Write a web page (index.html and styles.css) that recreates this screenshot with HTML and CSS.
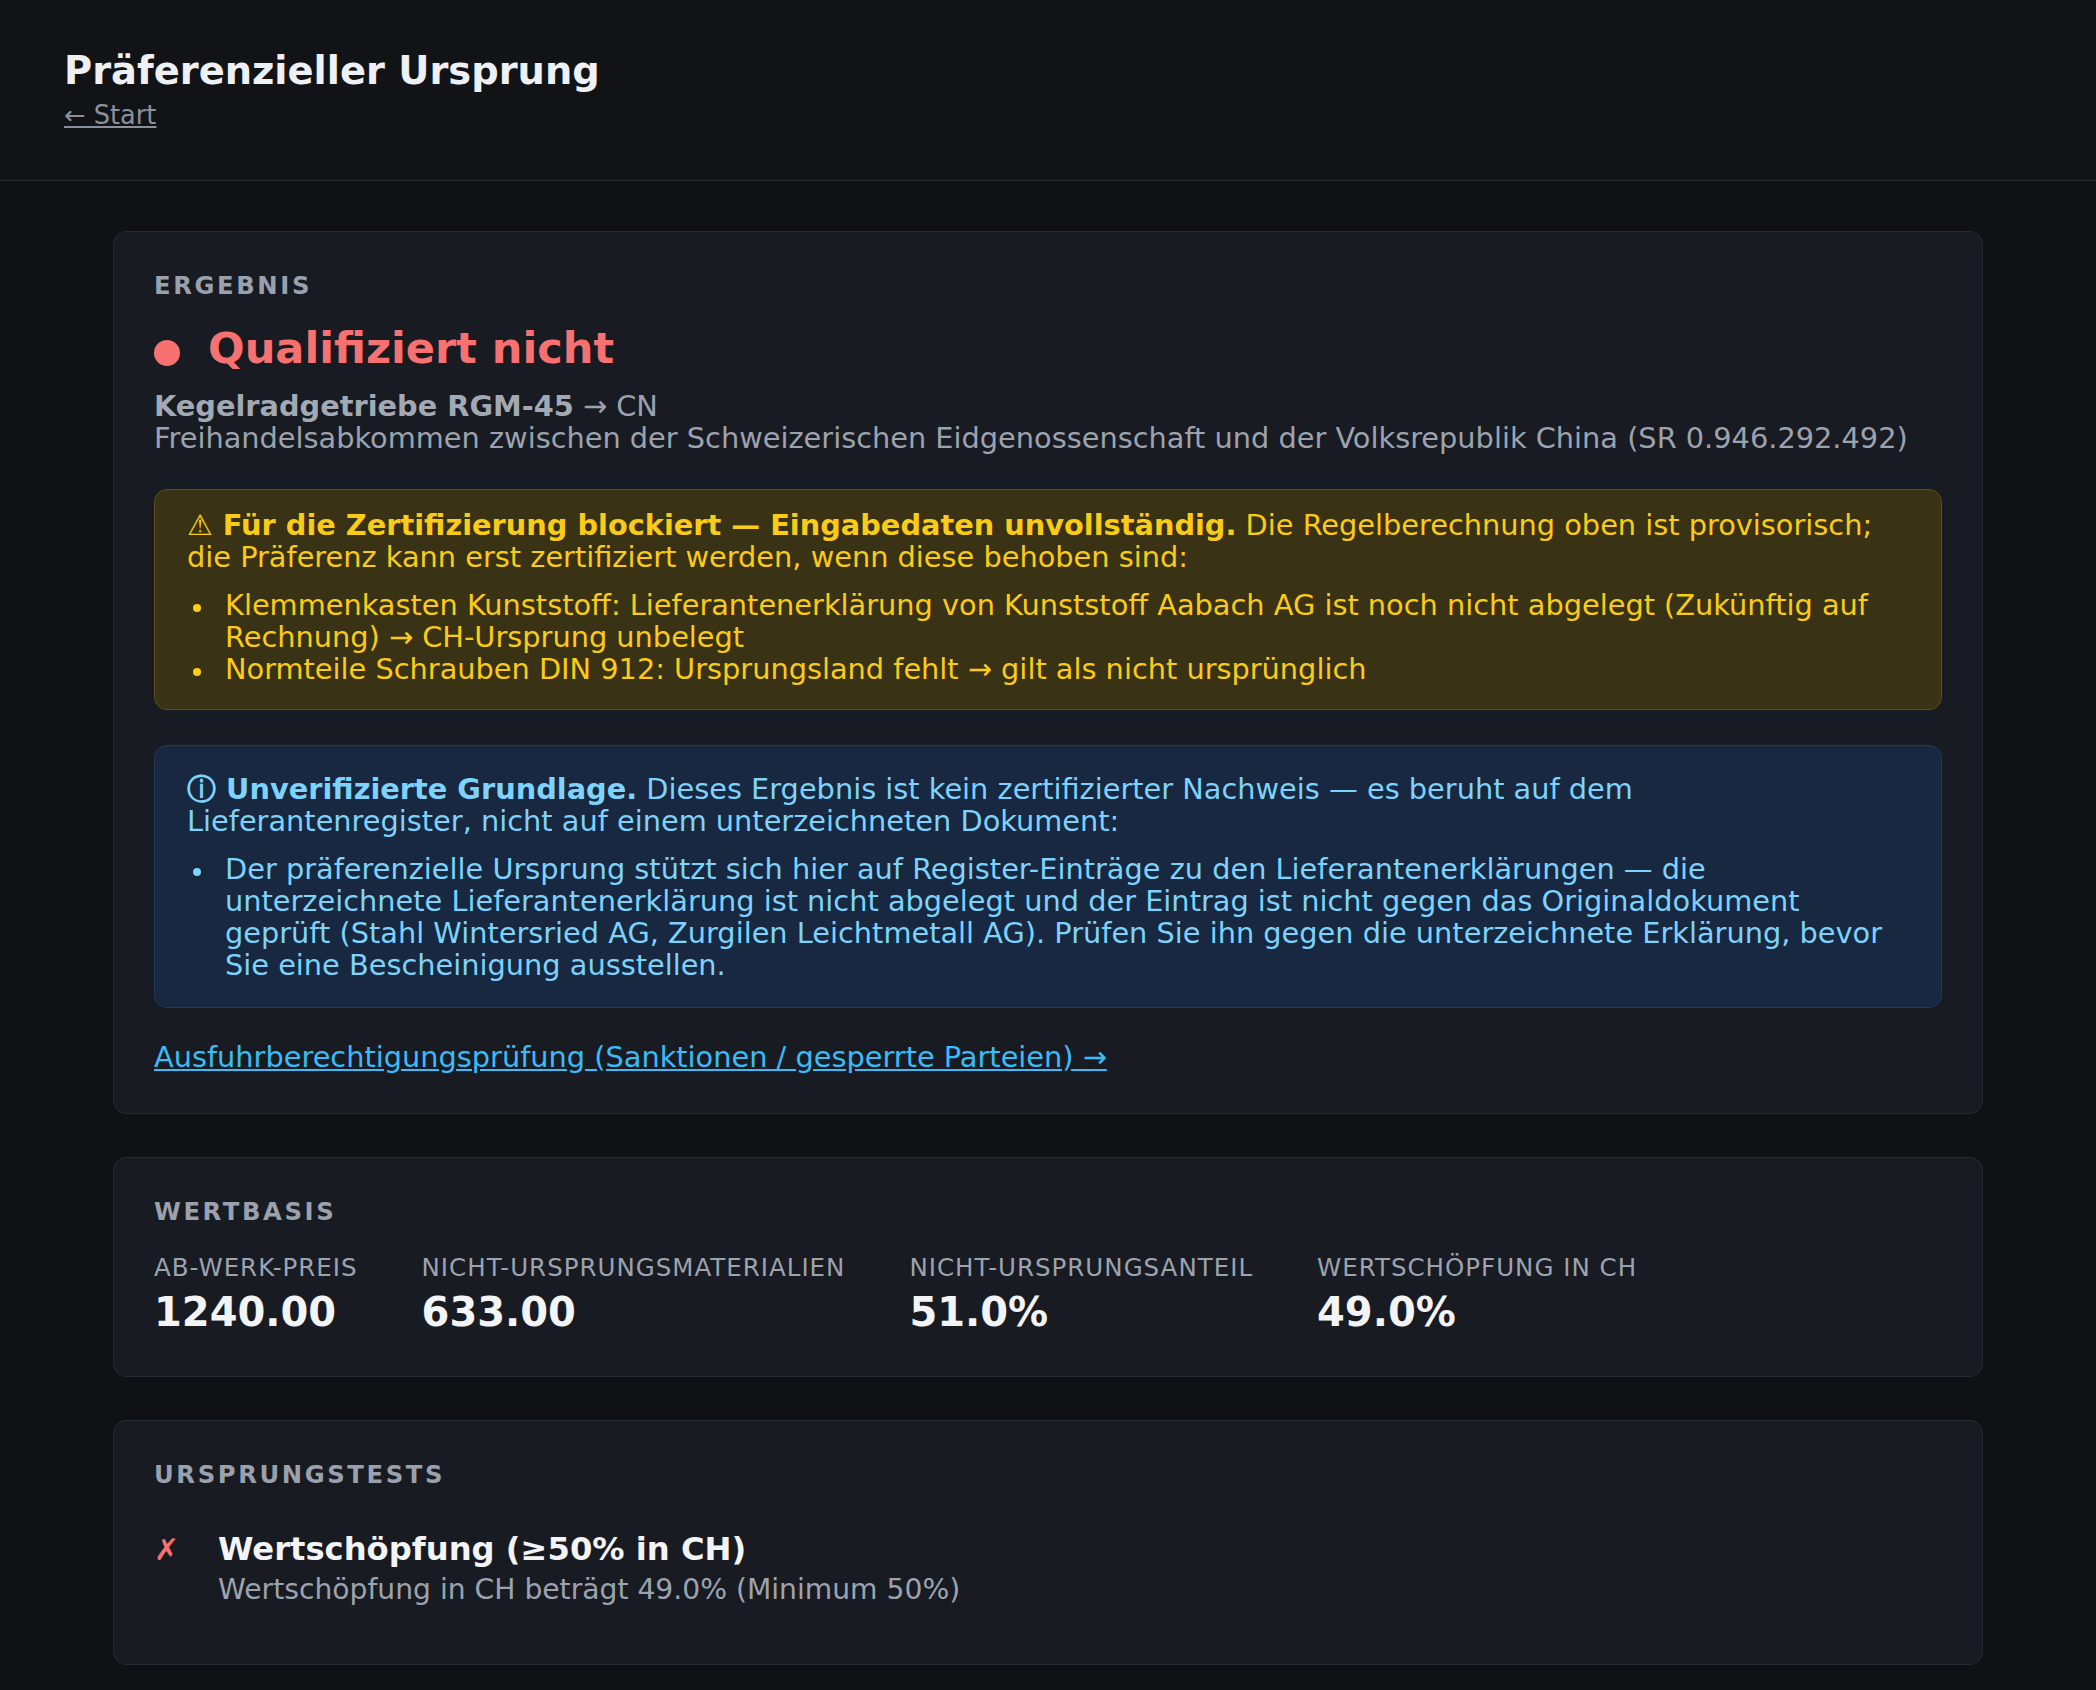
FILE: index.html
```html
<!DOCTYPE html>
<html lang="de">
<head>
<meta charset="utf-8">
<title>Präferenzieller Ursprung</title>
<link rel="stylesheet" href="styles.css">
</head>
<body>
<header class="topbar">
  <h1 class="page-title">Präferenzieller Ursprung</h1>
  <a class="back-link" href="#">← Start</a>
</header>

<main class="content">
  <section class="card">
    <h2 class="card-label">Ergebnis</h2>
    <div class="verdict verdict--fail"><span class="verdict-dot"></span><span>Qualifiziert nicht</span></div>
    <p class="product"><strong>Kegelradgetriebe RGM-45</strong> → CN<br>Freihandelsabkommen zwischen der Schweizerischen Eidgenossenschaft und der Volksrepublik China (SR 0.946.292.492)</p>

    <div class="notice notice--warn">
      <p><strong>⚠ Für die Zertifizierung blockiert — Eingabedaten unvollständig.</strong> Die Regelberechnung oben ist provisorisch; die Präferenz kann erst zertifiziert werden, wenn diese behoben sind:</p>
      <ul class="notice-list">
        <li>Klemmenkasten Kunststoff: Lieferantenerklärung von Kunststoff Aabach AG ist noch nicht abgelegt (Zukünftig auf Rechnung) → CH-Ursprung unbelegt</li>
        <li>Normteile Schrauben DIN 912: Ursprungsland fehlt → gilt als nicht ursprünglich</li>
      </ul>
    </div>

    <div class="notice notice--info">
      <p><strong>ⓘ Unverifizierte Grundlage.</strong> Dieses Ergebnis ist kein zertifizierter Nachweis — es beruht auf dem Lieferantenregister, nicht auf einem unterzeichneten Dokument:</p>
      <ul class="notice-list">
        <li>Der präferenzielle Ursprung stützt sich hier auf Register-Einträge zu den Lieferantenerklärungen — die unterzeichnete Lieferantenerklärung ist nicht abgelegt und der Eintrag ist nicht gegen das Originaldokument geprüft (Stahl Wintersried AG, Zurgilen Leichtmetall AG). Prüfen Sie ihn gegen die unterzeichnete Erklärung, bevor Sie eine Bescheinigung ausstellen.</li>
      </ul>
    </div>

    <a class="cross-link" href="#">Ausfuhrberechtigungsprüfung (Sanktionen / gesperrte Parteien) →</a>
  </section>

  <section class="card">
    <h2 class="card-label">Wertbasis</h2>
    <div class="metrics">
      <div class="metric">
        <div class="metric-label">Ab-Werk-Preis</div>
        <div class="metric-value">1240.00</div>
      </div>
      <div class="metric">
        <div class="metric-label">Nicht-Ursprungsmaterialien</div>
        <div class="metric-value">633.00</div>
      </div>
      <div class="metric">
        <div class="metric-label">Nicht-Ursprungsanteil</div>
        <div class="metric-value">51.0%</div>
      </div>
      <div class="metric">
        <div class="metric-label">Wertschöpfung in CH</div>
        <div class="metric-value">49.0%</div>
      </div>
    </div>
  </section>

  <section class="card">
    <h2 class="card-label">Ursprungstests</h2>
    <ul class="tests">
      <li class="test test--fail">
        <span class="test-icon">✗</span>
        <div class="test-body">
          <div class="test-title">Wertschöpfung (≥50% in CH)</div>
          <div class="test-detail">Wertschöpfung in CH beträgt 49.0% (Minimum 50%)</div>
        </div>
      </li>
    </ul>
  </section>
</main>
</body>
</html>
```

FILE: styles.css
```css
* {
  box-sizing: border-box;
}

body {
  margin: 0;
  background: #0f1115;
  font-family: "DejaVu Sans", "Noto Sans", sans-serif;
  font-size: 28.8px;
  line-height: 32px;
  color: #e5e7eb;
}

/* ---- page header ---- */
.topbar {
  padding: 49px 64px 50px;
  background: #111317;
  border-bottom: 1px solid #2a2d33;
}

.page-title {
  margin: 0;
  font-size: 38.4px;
  line-height: 44px;
  font-weight: 700;
  color: #eef0f4;
}

.back-link {
  display: block;
  width: fit-content;
  margin-top: 7px;
  font-size: 25.7px;
  line-height: 30px;
  color: #8b919c;
  text-decoration: underline;
}

/* ---- content column ---- */
.content {
  max-width: 1870px;
  margin: 0 auto;
  padding: 50px 0 40px;
  display: flex;
  flex-direction: column;
  gap: 43px;
}

.card {
  background: #181b22;
  border: 1px solid #262a32;
  border-radius: 13px;
  padding: 40px;
}

.card-label {
  margin: 0;
  font-size: 24.3px;
  line-height: 28px;
  font-weight: 700;
  letter-spacing: 2.6px;
  text-transform: uppercase;
  color: #9aa1ad;
}

/* ---- verdict ---- */
.verdict {
  display: flex;
  align-items: center;
  gap: 28px;
  margin-top: 24px;
  font-size: 43.1px;
  line-height: 49px;
  font-weight: 700;
}

.verdict--fail {
  color: #f87171;
}

.verdict-dot {
  flex: none;
  width: 26px;
  height: 26px;
  margin-top: 8px;
  border-radius: 50%;
  background: currentColor;
}

.product {
  margin: 17px 0 0;
  color: #9ca3af;
}

.product strong {
  color: #a3a9b4;
}

/* ---- notices ---- */
.notice {
  margin-top: 35px;
  border: 1px solid transparent;
  border-radius: 13px;
  padding: 19px 32px 24px;
}

.notice p {
  margin: 0;
}

.notice--warn {
  background: #3a3215;
  border-color: #5a4d1b;
  color: #facc15;
}

.notice--info {
  padding-top: 27px;
  padding-bottom: 26px;
  background: #172840;
  border-color: #1f3a5c;
  color: #7dd3fc;
}

.notice-list {
  list-style: none;
  margin: 16px 0 0;
  padding: 0;
}

.notice-list li {
  display: flex;
}

.notice-list li::before {
  content: "";
  flex: none;
  width: 8px;
  height: 8px;
  margin: 14.5px 24px 0 6px;
  border-radius: 50%;
  background: currentColor;
}

.cross-link {
  display: block;
  width: fit-content;
  margin-top: 33px;
  color: #38bdf8;
  text-decoration: underline;
}

/* ---- value basis ---- */
.metrics {
  display: flex;
  gap: 64px;
  margin-top: 28px;
}

.metric-label {
  font-size: 24.5px;
  line-height: 28px;
  letter-spacing: 1px;
  text-transform: uppercase;
  color: #9ca3af;
}

.metric-value {
  margin-top: 7px;
  font-size: 40px;
  line-height: 47px;
  font-weight: 700;
  color: #f3f4f6;
}

/* ---- origin tests ---- */
.tests {
  list-style: none;
  margin: 23px 0 0;
  padding: 0;
}

.test {
  display: flex;
  align-items: baseline;
  padding: 19px 0 18px;
}

.test-icon {
  flex: none;
  width: 40px;
  margin-right: 24px;
  font-size: 30px;
}

.test--fail .test-icon {
  color: #f87171;
}

.test-title {
  font-size: 32.2px;
  line-height: 37px;
  font-weight: 700;
  color: #f3f4f6;
}

.test-detail {
  margin-top: 6px;
  font-size: 28.2px;
  line-height: 32px;
  color: #9ca3af;
}
```
